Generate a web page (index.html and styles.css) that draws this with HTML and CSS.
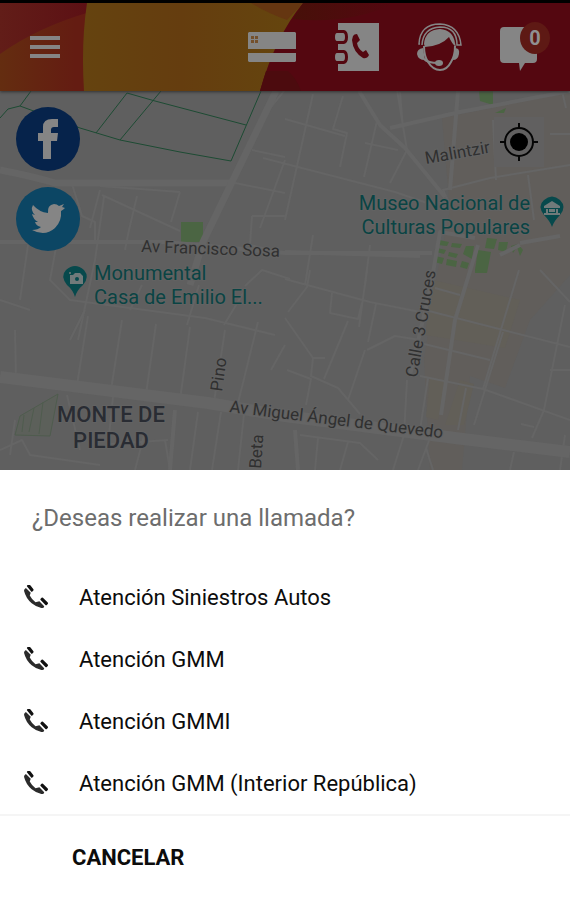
FILE: index.html
```
<!DOCTYPE html>
<html lang="es">
<head>
  <meta charset="UTF-8">
  <meta name="viewport" content="width=device-width, initial-scale=1">
  <title>Llamadas</title>
  <link rel="stylesheet" href="styles.css">
</head>
<body>

  <svg class="sprite" aria-hidden="true">
    <symbol id="phone" viewBox="0 0 26 26">
      <path d="M2 3Q0 4 0 6Q2 14 8 19Q13 23 18 24Q21 24 21 22L16 17L12 18Q8 15 6 11L7 8Z" fill="#2b2b2b"/>
      <path d="M4 1L6 1L9 5L8 6ZM18 15L19 14L24 19L23 20Z" fill="#111" stroke="#111" stroke-width="2" stroke-linejoin="round"/>
    </symbol>
  </svg>

  <header class="topbar">
    <svg class="topbar-bg" viewBox="0 0 570 88" preserveAspectRatio="none" aria-hidden="true">
      <defs>
        <linearGradient id="corner" x1="0" x2="1"><stop offset="0" stop-color="#642d10"/><stop offset=".75" stop-color="#641c12"/></linearGradient>
        <linearGradient id="gold" x1="0" x2="1"><stop offset="0" stop-color="#65430f"/><stop offset=".45" stop-color="#653d0f"/><stop offset="1" stop-color="#65460e"/></linearGradient>
        <linearGradient id="wine" x1="0" x2="1"><stop offset="0" stop-color="#621d18"/><stop offset="1" stop-color="#5c1014"/></linearGradient>
        <linearGradient id="shade" x1="0" x2="1"><stop offset="0" stop-color="#471009"/><stop offset="1" stop-color="#540710"/></linearGradient>
      </defs>
      <rect width="570" height="88" fill="#540710"/>
      <rect width="100" height="88" fill="url(#corner)"/>
      <path d="M0 0H90V9Q38 24 0 51Z" fill="url(#wine)"/>
      <path d="M87 0H303Q275 34 260 88H84Q81 40 87 0Z" fill="url(#gold)"/>
      <path d="M251 0H303L287 17Q267 10 251 0Z" fill="#653611"/>
      <path d="M303 0H395Q350 22 293 16Z" fill="url(#shade)"/>
      <path d="M288 68Q297 76 301 88H260L266 68Z" fill="#4c0b0e"/>
    </svg>

    <button class="icon-button" aria-label="Menú">
      <svg width="30" height="22" viewBox="0 0 30 22" fill="#858585"><path d="M0 0H30V4H0ZM0 9H30V13H0ZM0 18H30V22H0Z"/></svg>
    </button>

    <nav class="topbar-actions">
      <button class="icon-button" aria-label="Tarjeta">
        <svg width="48" height="30" viewBox="0 0 48 30">
          <path d="M1 0H47L48 1V17H0V1ZM0 21H48V29L47 30H1L0 29Z" fill="#858585"/>
          <path d="M3 4H6V7H3ZM7 4H10V7H7ZM3 8H6V11H3ZM7 8H10V11H7Z" fill="#74502c"/>
        </svg>
      </button>
      <button class="icon-button" aria-label="Directorio">
        <svg width="45" height="50" viewBox="0 0 45 50">
          <path d="M4 1H45V49H4Z" fill="#858585"/>
          <path d="M0 8H10Q14 9 14 15T10 22H0ZM0 28H10Q14 29 14 35T10 42H0Z" fill="#540710"/>
          <path d="M3 11H9Q11 11 11 15T9 19H3Q1 19 1 15T3 11ZM3 31H9Q11 31 11 35T9 39H3Q1 39 1 35T3 31Z" fill="#858585"/>
          <path d="M19 14Q20 12 23 12L26 18L23 21Q24 27 29 30L32 28L35 33Q33 37 29 36Q19 30 18 18Z" fill="#540710"/>
        </svg>
      </button>
      <button class="icon-button" aria-label="Asistencia">
        <svg width="45" height="50" viewBox="0 0 45 50">
          <path d="M3 22H2Q3 2 23 2Q42 3 44 23H40Q40 5 23 5Q6 6 5 23" fill="none" stroke="#858585" stroke-width="1.5"/>
          <path d="M7 22Q8 8 23 7Q36 8 38 21L39 25Q35 22 32 15Q24 24 8 25Z" fill="#858585"/>
          <path d="M6 26Q0 27 0 32Q1 38 8 38ZM38 26Q43 26 42 32Q41 38 36 38Z" fill="#858585"/>
          <path d="M7 24Q7 34 11 40Q16 48 23 48Q30 48 34 40Q38 34 38 24" fill="none" stroke="#858585" stroke-width="2"/>
          <path d="M7 37Q11 41 21 41" fill="none" stroke="#858585" stroke-width="2"/>
          <ellipse cx="22" cy="41" rx="4" ry="3" fill="#858585"/>
        </svg>
      </button>
      <button class="icon-button chat" aria-label="Mensajes">
        <svg width="50" height="50" viewBox="0 0 50 50"><path d="M4 5H33Q37 5 37 9V37Q37 41 33 41H25L20 49L19 41H4Q0 41 0 37V9Q0 5 4 5Z" fill="#858585"/></svg>
        <span class="badge">0</span>
      </button>
    </nav>
  </header>

  <main class="map-area">
    <svg class="map" viewBox="0 91 570 379" preserveAspectRatio="xMidYMid slice">
      <rect y="91" width="570" height="379" fill="#5f5f5f"/>

      <!-- zonas comerciales -->
      <g fill="#615e5b">
        <path d="M442 118L570 92V275L530 320L505 388L470 376L462 470H430L424 360L436 280L450 210Z"/>
      </g>
      <g fill="#625f58">
        <path d="M433 280L520 300L505 348L425 335ZM430 378L448 380L438 420L426 417ZM460 380L474 384L464 425L445 425Z"/>
      </g>

      <!-- parques -->
      <g fill="#4b6543">
        <path d="M181 222H203V242H181ZM479 91H493V105L480 101ZM495 113L506 108L504 113ZM475 270H486V273H475Z"/>
        <path d="M439 240L449 242L447 246L438 245ZM452 243L462 244L460 248L451 247ZM466 246H474L472 259L463 254ZM437 248L446 250L444 254L436 252ZM449 252L458 254L456 258L448 256ZM435 256L444 258L442 264L434 262ZM447 259L457 261L456 267L446 265ZM462 261L469 263L467 269L460 267Z"/>
        <path d="M487 238L497 239L494 249L485 248ZM499 242H508L506 252L498 250ZM511 246L518 244L523 250L520 256L517 247L513 253ZM478 250L491 252L487 273L475 270Z"/>
      </g>

      <!-- calles -->
      <g class="streets" stroke-width="2">
        <path d="M72 184L82 216L95 222V240M102 195L180 231M104 197L95 260L78 340M137 196L129 230L125 250M180 192L171 222M100 186L180 192M57 242L50 280L70 300L205 318L275 335"/>
        <path d="M0 300L30 310M15 330L16 380M88 316L77 385M122 320L111 390M156 324L146 394M190 327L180 400M225 330L214 402M258 322L238 403M285 345L271 370"/>
        <path d="M130 310L142 285M187 325L199 285M224 325L245 290M252 216L250 245L285 253M252 216H285M245 286L262 270L290 279"/>
        <path d="M313 94L285 220M343 96L333 129L347 133L340 167M377 121L364 177M365 143L398 150M400 92L403 128M397 90L407 150L390 183M450 205L443 190L490 178L570 165M528 175L534 220M493 120L496 180M550 134H570M562 91L566 108"/>
        <path d="M285 279L370 302L420 312M310 270L307 287L288 312M367 270L359 327M332 293L330 313L358 319L362 303M376 304L368 342M348 321L324 379M365 350L348 400M285 318L313 358L311 376L338 388L360 414M287 370L311 379L306 405M313 358L325 358M367 350L395 336L420 340M407 380L404 435L393 470M428 378L420 430M466 388L458 430"/>
        <path d="M519 270L483 389M503 332L474 425M565 305L544 410L532 438M550 370H570M521 424L534 427M540 270L570 302M435 288L460 295M425 310L570 347M420 343L490 360M420 376L483 389L570 420"/>
        <path d="M90 228L100 190M67 395L80 450M0 450L22 440L30 455L100 465M15 420L10 455M113 397L108 445M145 432L135 470M198 412L190 470M221 412L212 470M244 414L238 470M300 435L360 443L378 460M318 438L315 470M348 442L340 470M430 438L418 470M426 448L433 470M514 452L510 470M565 435L560 470M165 440L170 470M110 444L168 440M85 310L70 340M28 245L20 300"/>
        <path d="M285 119L345 136M263 158L395 192L430 204M265 114L285 90M235 183L285 193M252 150L285 157M260 228L285 160M313 235L305 285M370 245L365 285"/>
      </g>
      <g class="streets" stroke-width="4">
        <path d="M359 91L380 125L405 148L445 197M458 91L450 190M390 128L460 112L570 91M0 242H165L285 253H432M478 245L455 320L441 415M520 245L500 255M475 238L440 232L430 290L410 375M285 252L420 256M560 236L520 243M295 430L298 470M175 410L170 470"/>
      </g>
      <g class="streets">
        <path d="M0 170Q35 177 55 183H232" stroke-width="7"/>
        <path d="M276 91L232 182L203 242L190 285" stroke-width="7"/>
        <path d="M0 377Q130 393 208 403L285 416L455 438L570 452" stroke-width="12"/>
      </g>

      <g class="trail">
        <path d="M0 118L8 109L20 106L80 128L120 140L180 152L231 161L261 91M20 106L31 91M96 133L127 93L155 101L246 125M120 140L161 91"/>
      </g>
      <path d="M15 435L20 416L58 394L50 436ZM24 415L22 432M34 408L29 432M43 402L39 434" fill="#5c605a" stroke="#4f5c4e"/>

      <g class="label">
        <text x="141" y="252" transform="rotate(2 141 252)">Av Francisco Sosa</text>
        <text x="426" y="164" transform="rotate(-10 426 164)">Malintzir</text>
        <text x="417" y="378" transform="rotate(-80 417 378)">Calle 3 Cruces</text>
        <text x="222" y="392" transform="rotate(-82 222 392)">Pino</text>
        <text x="261" y="469" transform="rotate(-86 261 469)">Beta</text>
        <text x="229" y="412" transform="rotate(7 229 412)">Av Miguel Ángel de Quevedo</text>
      </g>
      <g class="label place">
        <text x="94" y="280">Monumental</text>
        <text x="94" y="304">Casa de Emilio El...</text>
        <text x="530" y="210" text-anchor="end">Museo Nacional de</text>
        <text x="530" y="234" text-anchor="end">Culturas Populares</text>
      </g>
      <g class="label district">
        <text x="111" y="422">MONTE DE</text>
        <text x="111" y="448">PIEDAD</text>
      </g>

      <g>
        <path d="M75 297Q73 290 67 285Q60 276 66 270Q75 262 84 270Q90 277 83 285Q77 290 75 297Z" fill="#07494c"/>
        <path d="M70 275H73L75 273H80L83 276V284H70Z" fill="#707a7a"/>
        <circle cx="77" cy="279" r="2" fill="#07494c"/>
        <circle cx="70" cy="273" r="1" fill="#707a7a"/>
      </g>
      <g>
        <path d="M552 227Q550 221 544 215Q537 206 544 200Q552 193 560 200Q567 207 560 215Q554 221 552 227Z" fill="#07494c"/>
        <path d="M552 201L560 206V208H544V206ZM546 209H548V213H546ZM556 209H558V213H556ZM544 213H560V215H544ZM549 209H555V212H549Z" fill="#707a7a"/>
      </g>
    </svg>

    <div class="social">
      <a href="#facebook" class="social-link facebook" aria-label="Facebook">
        <svg width="64" height="64" viewBox="0 0 64 64"><path d="M27 52V34H22V26H27V20Q27 12 36 12H42V20H38Q35 20 35 23V26H42L41 34H35V52Z" fill="#858585"/></svg>
      </a>
      <a href="#twitter" class="social-link twitter" aria-label="Twitter">
        <svg width="64" height="64" viewBox="0 0 64 64"><path d="M49 21Q47 23 45 24Q46 34 39 41Q29 50 16 43Q22 43 25 40Q20 39 19 35H22Q17 32 16 27L19 28Q14 23 17 18Q23 25 32 26Q31 18 38 17Q41 17 43 19L48 17L46 20Z" fill="#858585"/></svg>
      </a>
    </div>

    <button class="locate" aria-label="Mi ubicación">
      <svg width="38" height="38" viewBox="0 0 38 38"><circle cx="19" cy="19" r="9" fill="#000"/><circle cx="19" cy="19" r="14" fill="none" stroke="#050505" stroke-width="2"/><path d="M19 0V6M19 32V38M0 19H6M32 19H38" stroke="#050505" stroke-width="2"/></svg>
    </button>
  </main>

  <section class="sheet">
    <h1 class="sheet-title">¿Deseas realizar una llamada?</h1>
    <ul class="call-list">
      <li><button class="call"><svg class="phone"><use href="#phone"/></svg>Atención Siniestros Autos</button></li>
      <li><button class="call"><svg class="phone"><use href="#phone"/></svg>Atención GMM</button></li>
      <li><button class="call"><svg class="phone"><use href="#phone"/></svg>Atención GMMI</button></li>
      <li><button class="call"><svg class="phone"><use href="#phone"/></svg>Atención GMM (Interior República)</button></li>
    </ul>
    <button class="cancel">CANCELAR</button>
  </section>

</body>
</html>
```
FILE: styles.css
```
* {
  box-sizing: border-box;
}

body {
  margin: 0;
  min-height: 100vh;
  display: flex;
  flex-direction: column;
  background: #fff;
  color: #0c0c0c;
  font-family: Roboto, "Liberation Sans", sans-serif;
}

button {
  padding: 0;
  border: none;
  background: none;
  color: inherit;
  font-family: inherit;
  cursor: pointer;
}

svg {
  display: block;
}

.sprite {
  position: absolute;
  width: 0;
  height: 0;
}

/* barra superior */
.topbar {
  position: relative;
  z-index: 1;
  height: 91px;
  padding: 0 20px 0 30px;
  display: flex;
  align-items: center;
  justify-content: space-between;
  border-top: 3px solid #000;
  box-shadow: 0 1px 3px #333;
}

.topbar-bg {
  position: absolute;
  inset: 0;
  width: 100%;
  height: 100%;
}

.icon-button {
  position: relative;
}

.topbar-actions {
  display: flex;
  align-items: center;
  gap: 38px;
}

.badge {
  position: absolute;
  top: 0;
  right: 0;
  width: 30px;
  height: 32px;
  border-radius: 50%;
  background: #5e1914;
  color: #909090;
  font-size: 20px;
  font-weight: bold;
  line-height: 32px;
  text-align: center;
}

/* mapa */
.map-area {
  position: relative;
  flex: 1;
  min-height: 300px;
  overflow: hidden;
  background: #5f5f5f;
}

.map {
  position: absolute;
  width: 100%;
  height: 100%;
}

.streets {
  fill: none;
  stroke: #656565;
  stroke-linejoin: round;
}

.trail {
  fill: none;
  stroke: #1d4b33;
  stroke-width: 1;
}

.label {
  fill: #303030;
  stroke: #626262;
  stroke-width: 2px;
  paint-order: stroke;
  font-size: 17px;
}

.place {
  fill: #0a4444;
  font-size: 20px;
}

.district {
  fill: #292c33;
  font-size: 22px;
  font-weight: 500;
  text-anchor: middle;
}

.social {
  position: absolute;
  top: 16px;
  left: 16px;
  display: flex;
  flex-direction: column;
  gap: 16px;
}

.social-link {
  border-radius: 50%;
}

.facebook {
  background: #06234b;
}

.twitter {
  background: #0c4664;
}

.locate {
  position: absolute;
  top: 26px;
  right: 26px;
  padding: 6px;
  background: #616060;
}

/* panel de llamadas */
.sheet {
  background: #fff;
}

.sheet-title {
  margin: 0;
  padding: 0 32px;
  color: #6d6d6d;
  font-size: 24px;
  font-weight: normal;
  line-height: 96px;
}

.call-list {
  margin: 0;
  padding: 0;
  list-style: none;
  border-bottom: 2px solid #f5f5f5;
}

.call {
  width: 100%;
  min-height: 62px;
  padding: 0 24px;
  display: flex;
  align-items: center;
  gap: 30px;
  font-size: 22px;
  text-align: left;
}

.phone {
  flex: none;
  width: 25px;
  height: 25px;
}

.cancel {
  width: 100%;
  padding: 0 72px;
  font-size: 22px;
  font-weight: bold;
  line-height: 84px;
  text-align: left;
}
```
